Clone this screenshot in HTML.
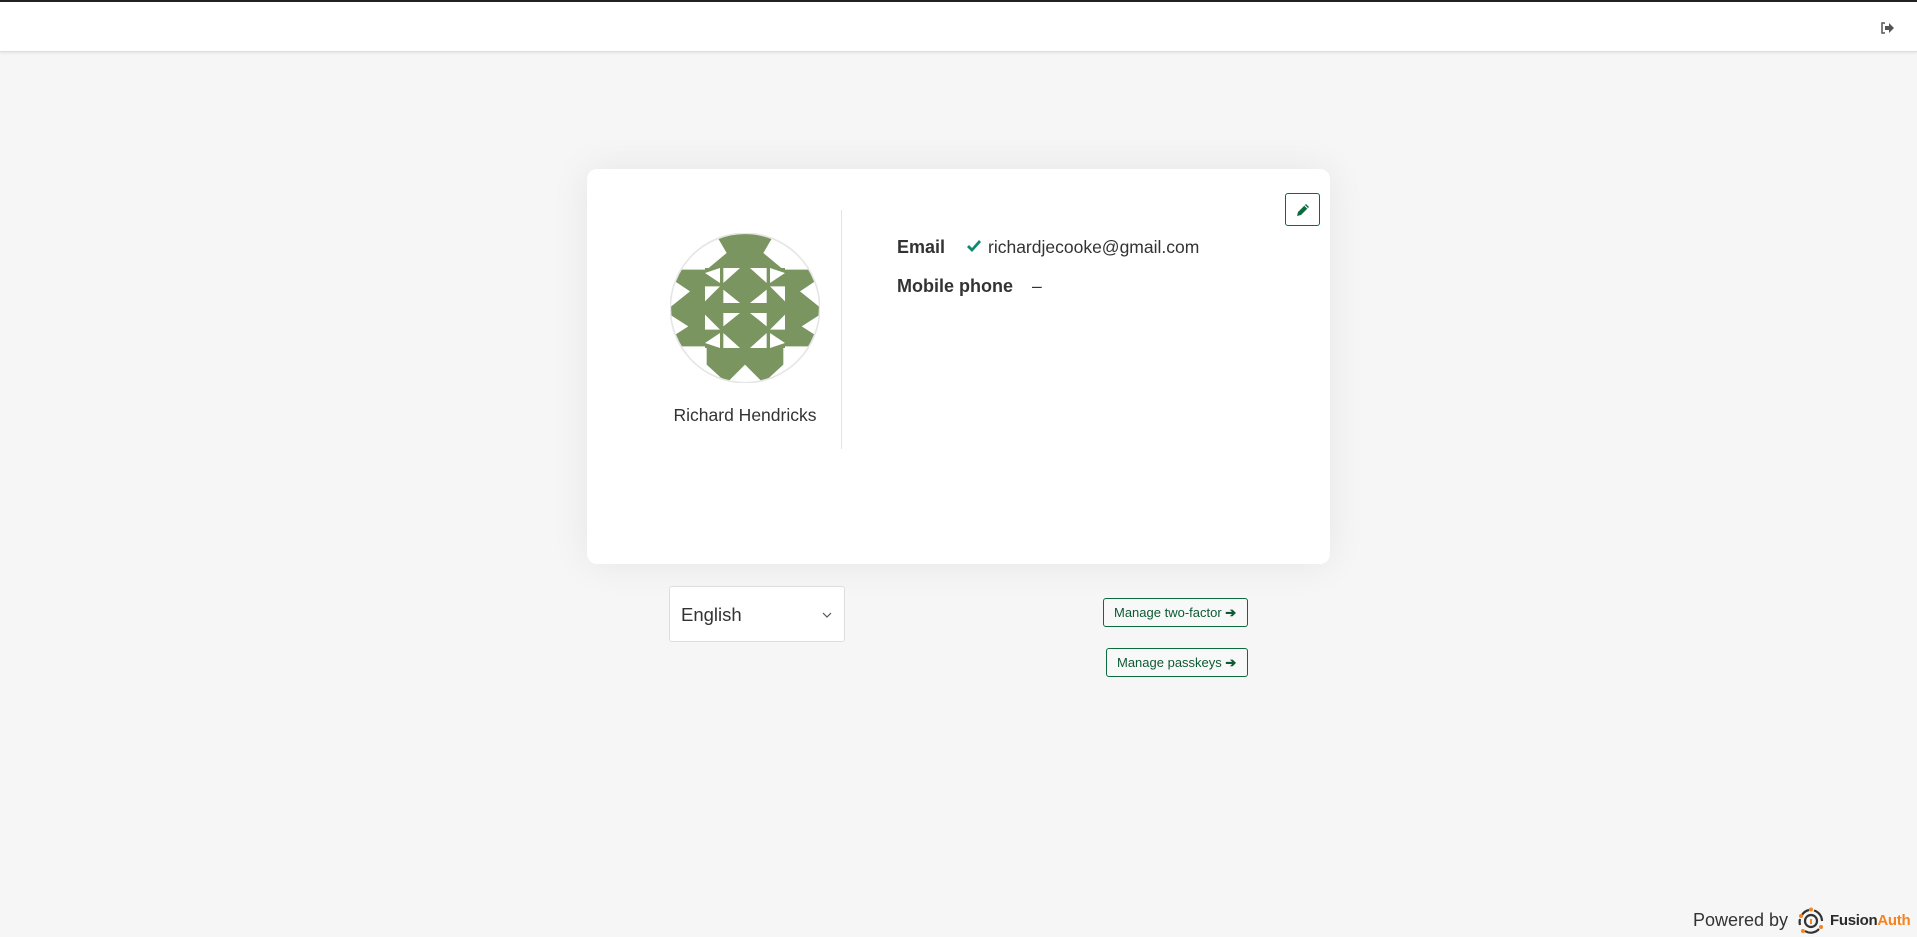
<!DOCTYPE html>
<html><head><meta charset="utf-8"><style>
*{box-sizing:border-box;margin:0;padding:0}
html,body{width:1917px;height:937px;overflow:hidden;background:#f6f6f6;font-family:"Liberation Sans",sans-serif;color:#333}
.top{position:absolute;left:0;top:0;width:1917px;height:52px;background:#fff;border-top:2px solid #222;border-bottom:1px solid #ddd;box-shadow:0 1px 3px rgba(0,0,0,.08)}
.card{position:absolute;left:587px;top:169px;width:743px;height:395px;background:#fff;border-radius:10px;box-shadow:0 0 40px rgba(0,0,0,.07)}
.edit{position:absolute;left:1285px;top:193px;width:35px;height:33px;border:1.5px solid #0d6a3c;border-radius:3px;background:#fff}
.div{position:absolute;left:841px;top:210px;width:1px;height:239px;background:#e3e3e3}
.name{position:absolute;left:645px;width:200px;top:405px;text-align:center;font-size:17.5px;color:#333}
.lbl{position:absolute;font-weight:bold;font-size:18px;color:#333}
.val{position:absolute;font-size:17.5px;color:#333}
.sel{position:absolute;left:669px;top:586px;width:176px;height:56px;border:1px solid #ddd;border-radius:3px;background:#fff;font-size:18.5px;padding:17px 0 0 11px}
.btn{position:absolute;height:29px;border:1px solid #0d6a3c;border-radius:3px;font-size:13px;color:#0d5a34;padding:6px 0 0 10px;background:#f8f8f8}
.pw{position:absolute;left:1693px;top:910px;font-size:18px;color:#333}
.fa{position:absolute;left:1830px;top:912px;font-size:15px;font-weight:bold;color:#2b2b2b;letter-spacing:-.3px}
</style></head><body>
<div class="top"></div>
<svg style="position:absolute;left:1881px;top:22px" width="14" height="12" viewBox="0 0 14 12"><path d="M4 1H1v10h3" fill="none" stroke="#555" stroke-width="1.5"/><path d="M4 4h4V1l5 5-5 5V8H4z" fill="#555"/></svg>
<div class="card"></div>
<div class="edit"><svg style="position:absolute;left:10px;top:9px" width="14" height="14" viewBox="0 0 14 14"><path d="M10 1l3 3-8 8-4 1 1-4z" fill="#0d6a3c"/><path d="M8.6 2.4l3 3" stroke="#fff" stroke-width="1"/></svg></div>
<div class="div"></div>
<svg style="position:absolute;left:670px;top:233px" width="150" height="150" viewBox="15 15 450 450">
<defs><clipPath id="c"><circle cx="240" cy="240" r="224"/></clipPath>
<g id="q" fill="#fff">
<polygon points="130,145 175,130 175,175"/>
<polygon points="185,130 235,130 185,175"/>
<polygon points="130,185 175,185 130,230"/>
<polygon points="185,195 235,235 185,235"/>
</g></defs>
<g clip-path="url(#c)">
<rect x="0" y="0" width="480" height="480" fill="#fff"/>
<g fill="#7a9560">
<polygon points="150,15 330,15 295,75 355,125 125,125 185,75"/>
<polygon points="0,125 125,125 125,355 0,355 15,330 70,295 15,260 0,250 75,190 15,150"/>
<polygon points="480,125 355,125 355,355 480,355 465,330 410,295 465,260 480,250 405,190 465,150"/>
<polygon points="125,355 355,355 355,410 295,465 240,410 185,465 125,410"/>
<polygon points="0,355 40,355 40,420 0,420"/>
<rect x="120" y="120" width="240" height="240"/>
</g>
<g transform="translate(-10,-10)"><use href="#q"/></g>
<g transform="translate(490,-10) scale(-1,1)"><use href="#q"/></g>
<g transform="translate(-10,490) scale(1,-1)"><use href="#q"/></g>
<g transform="translate(490,490) scale(-1,-1)"><use href="#q"/></g>
</g>
<circle cx="240" cy="240" r="224" fill="none" stroke="#e6e6e6" stroke-width="5"/>
</svg>
<div class="name">Richard Hendricks</div>
<div class="lbl" style="left:897px;top:237px">Email</div>
<svg style="position:absolute;left:966px;top:240px" width="16" height="13" viewBox="0 0 16 13"><path d="M1 7l5 5L15 2l-2-2-7 8-3-3z" fill="#0f8a6a"/></svg>
<div class="val" style="left:988px;top:237px">richardjecooke@gmail.com</div>
<div class="lbl" style="left:897px;top:276px">Mobile phone</div>
<div class="val" style="left:1032px;top:276px">–</div>
<div class="sel">English<svg style="position:absolute;left:152px;top:25px" width="10" height="6" viewBox="0 0 10 6"><path d="M1 1l4 4 4-4" fill="none" stroke="#555" stroke-width="1.2"/></svg></div>
<div class="btn" style="left:1103px;top:598px;width:145px">Manage two-factor <b>➔</b></div>
<div class="btn" style="left:1106px;top:648px;width:142px">Manage passkeys <b>➔</b></div>
<div class="pw">Powered by</div>
<svg style="position:absolute;left:1797px;top:907px" width="28" height="28" viewBox="0 0 28 28">
<path d="M5 8A11 11 0 0 1 12 3" fill="none" stroke="#333" stroke-width="2.2"/>
<path d="M17 3.5A11 11 0 0 1 25 14" fill="none" stroke="#333" stroke-width="2.2"/>
<path d="M22 22A11 11 0 0 1 8 24" fill="none" stroke="#333" stroke-width="2.2"/>
<path d="M3 18A11 11 0 0 1 3 12" fill="none" stroke="#333" stroke-width="2.2"/>
<circle cx="14" cy="14" r="6" fill="none" stroke="#333" stroke-width="2.2"/>
<rect x="13" y="12" width="2" height="5" fill="#f58320"/>
<circle cx="14" cy="2.5" r="2" fill="#f58320"/><circle cx="4" cy="9" r="2" fill="#f58320"/><circle cx="24" cy="20" r="2" fill="#f58320"/><circle cx="6" cy="24" r="2" fill="#f58320"/>
</svg>
<div class="fa">Fusion<span style="color:#f58320">Auth</span></div>
</body></html>
